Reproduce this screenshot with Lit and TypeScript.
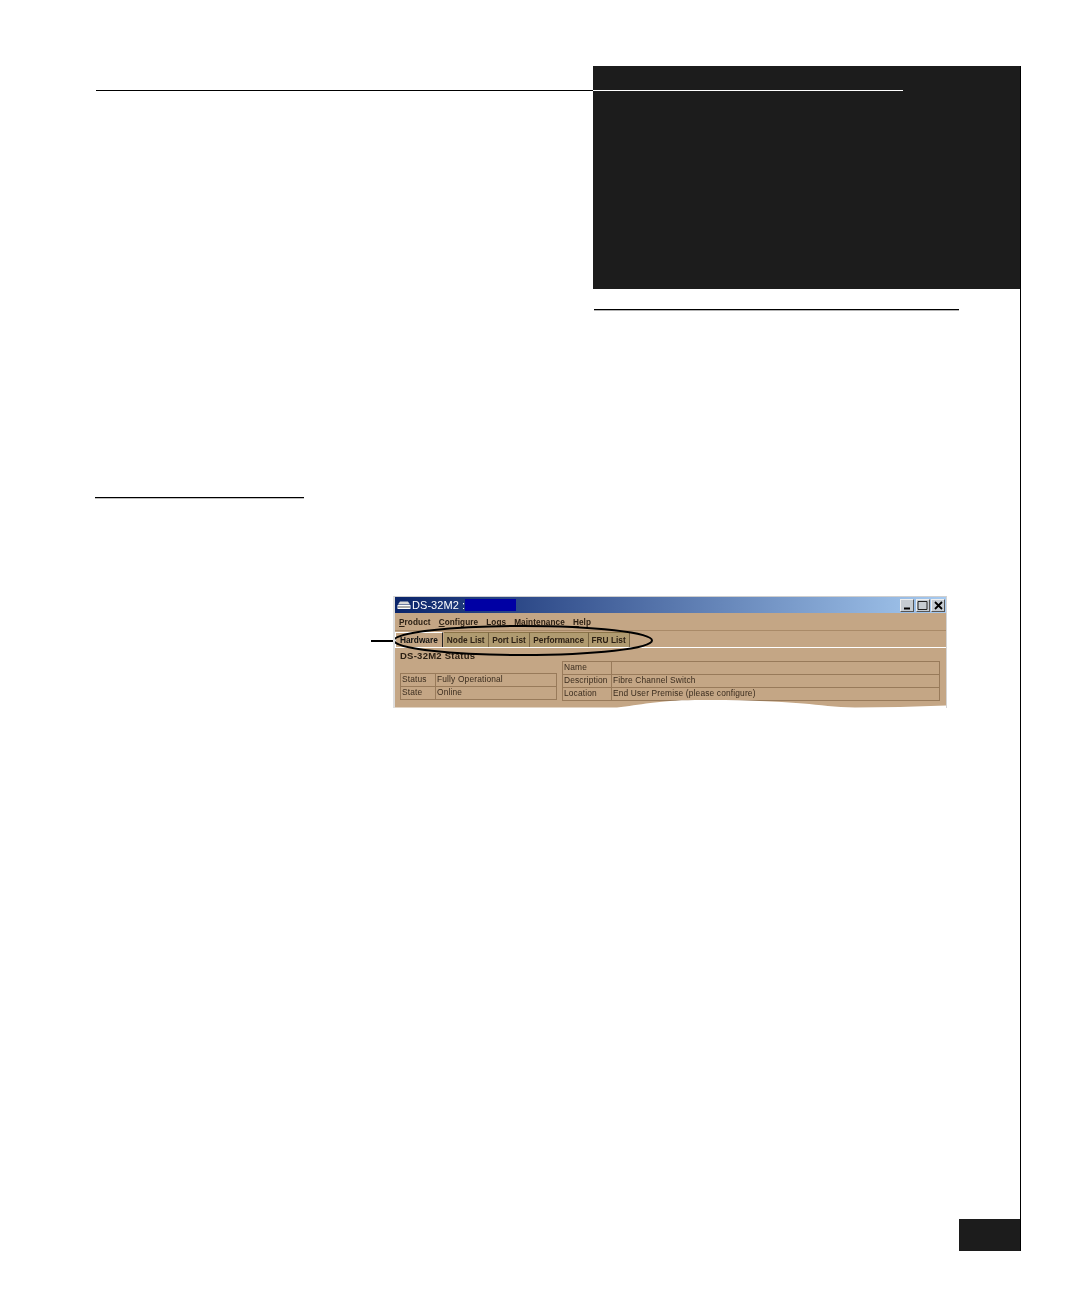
import { LitElement, html, css } from "lit";
import { customElement } from "lit/decorators.js";

@customElement("app-root")
export class AppRoot extends LitElement {
  static styles = css`
    :host { display: block; width: 1080px; height: 1296px; background: #fff; font-family: "Liberation Sans", Arial, sans-serif; overflow: hidden; }
    .page { display: flex; flex-direction: column; padding-top: 66px; box-sizing: border-box; height: 1296px; }
    .top { display: flex; width: 1021px; height: 223px; }
    .top-left { width: 593px; box-sizing: border-box; padding: 24px 0 0 96px; }
    .rule-black { height: 1px; background: #000; }
    .dark { flex: 1; box-sizing: border-box; background: #1c1c1c; border-right: 1px solid #000; padding-top: 24px; }
    .rule-white { width: 310px; height: 1px; background: #fff; }
    .body { width: 1021px; height: 962px; box-sizing: border-box; border-right: 1px solid #000; display: flex; flex-direction: column; }
    .rule-sub { width: 365px; height: 1px; background: #000; box-shadow: 0 1px 0 rgba(0,0,0,.3); margin: 20px 0 0 594px; }
    .rule-sec { width: 209px; height: 1px; background: #000; box-shadow: 0 1px 0 rgba(0,0,0,.25); margin: 187px 0 0 95px; }
    .figure { display: flex; align-items: flex-start; margin: 98px 0 0 371px; }
    .callout { width: 22px; height: 2px; background: #000; margin-top: 44px; }
    .window { position: relative; width: 554px; height: 112px; box-sizing: border-box; background: #c4a685; border-left: 2px solid #dedede; border-right: 1px solid #d4d4d4; border-top: 1px solid #cfcfcf; filter: blur(0.4px); overflow: hidden; color: #2c2014; }
    .titlebar { height: 16px; display: flex; align-items: center; padding: 0 1px 0 2px; background: linear-gradient(90deg, #0a246a, #a6caf0); color: #fff; font-size: 11px; letter-spacing: 0.05px; }
    .pc { width: 14px; height: 10px; margin-right: 1px; flex: none; }
    .app-name { width: 53px; flex: none; white-space: nowrap; }
    .redact { width: 51px; height: 12px; background: #0000a4; flex: none; }
    .controls { margin-left: auto; display: flex; gap: 1.5px; align-items: center; }
    .ctl { width: 12px; height: 11px; background: #c6ccd2; border: 1px solid; border-color: #eee #555 #555 #eee; box-sizing: content-box; display: flex; align-items: center; justify-content: center; }
    .ctl svg { display: block; }
    .menu { height: 18px; padding-top: 1px; box-sizing: border-box; display: flex; align-items: center; gap: 8px; padding-left: 4px; font-size: 8.2px; font-weight: bold; letter-spacing: 0.1px; border-bottom: 1px solid #a98a68; }
    .tabs { height: 17px; display: flex; align-items: flex-end; font-size: 8.3px; font-weight: bold; border-bottom: 1px solid #fff; box-sizing: border-box; }
    .tab { height: 14px; line-height: 14px; padding: 0 3.5px 0 3px; background: #b09b70; border-top: 1px solid #8a7448; border-right: 1px solid #7a6644; white-space: nowrap; }
    .tab.on { background: #c4a685; border-top: 1px solid #fff; border-left: 1px solid #fff; border-right: 1px solid #222; color: #111; margin-right: 1px; padding: 0 4px 0 4px; }
    .content { display: flex; padding-left: 5px; position: relative; gap: 5px; }
    .left-col { width: 157px; flex: none; }
    .status-title { font-size: 9.5px; font-weight: bold; letter-spacing: 0.25px; line-height: 12px; margin: 2px 0 0 0; height: 23px; white-space: nowrap; }
    .grid { display: grid; border: 1px solid #987a5a; border-bottom: 0; font-size: 8.4px; letter-spacing: 0.15px; }
    .grid.small { grid-template-columns: 35px 1fr; }
    .grid.large { grid-template-columns: 49px 1fr; width: 378px; margin-top: 13px; box-sizing: border-box; }
    .cell { height: 12px; line-height: 11px; padding-left: 1px; border-bottom: 1px solid #987a5a; white-space: nowrap; color: #3a2c1e; }
    .cell.k { border-right: 1px solid #987a5a; }
    .ellipse { position: absolute; left: 0; top: 0; width: 551px; height: 111px; pointer-events: none; }
    .wave { position: absolute; left: 0; top: 0; width: 551px; height: 111px; }
    .spacer { flex: 1; }
    .pageno { align-self: flex-end; width: 61px; height: 32px; background: #1c1c1c; }
  `;

  render() {
    return html`
      <div class="page">
        <div class="top">
          <div class="top-left"><div class="rule-black"></div></div>
          <div class="dark"><div class="rule-white"></div></div>
        </div>
        <div class="body">
          <div class="rule-sub"></div>
          <div class="rule-sec"></div>
          <div class="figure">
            <div class="callout"></div>
            <div class="window">
              <div class="titlebar">
                <svg class="pc" viewBox="0 0 14 10"><path d="M3 1.500h8l2 3H1z" fill="#d8d8d8"/><rect x="0.500" y="5" width="13" height="4" fill="#fff"/><path d="M1 7h12" stroke="#555" stroke-width="1"/></svg>
                <span class="app-name">DS-32M2 :</span>
                <span class="redact"></span>
                <div class="controls">
                  <div class="ctl"><svg width="9" height="9" viewBox="0 0 9 9"><path d="M1 7.500h6" stroke="#000" stroke-width="2"/></svg></div>
                  <div class="ctl"><svg width="11" height="10" viewBox="0 0 11 10"><path d="M1 1.500h9v8H1z" fill="none" stroke="#222" stroke-width="1"/></svg></div>
                  <div class="ctl"><svg width="9" height="9" viewBox="0 0 9 9"><path d="M1 1l7 7M8 1l-7 7" stroke="#000" stroke-width="1.800"/></svg></div>
                </div>
              </div>
              <div class="menu">
                <span><u>P</u>roduct</span><span><u>C</u>onfigure</span><span><u>L</u>ogs</span><span><u>M</u>aintenance</span><span><u>H</u>elp</span>
              </div>
              <div class="tabs">
                <div class="tab on">Hardware</div>
                <div class="tab">Node List</div>
                <div class="tab">Port List</div>
                <div class="tab">Performance</div>
                <div class="tab">FRU List</div>
              </div>
              <div class="content">
                <div class="left-col">
                  <div class="status-title">DS-32M2 Status</div>
                  <div class="grid small">
                    <div class="cell k">Status</div><div class="cell">Fully Operational</div>
                    <div class="cell k">State</div><div class="cell">Online</div>
                  </div>
                </div>
                <div class="grid large">
                  <div class="cell k">Name</div><div class="cell"></div>
                  <div class="cell k">Description</div><div class="cell">Fibre Channel Switch</div>
                  <div class="cell k">Location</div><div class="cell">End User Premise (please configure)</div>
                </div>
              </div>
              <svg class="wave" viewBox="0 0 551 111"><path d="M0 110.500 H222 C245 108 262 103.500 300 103 C340 102.500 375 104 408 106.500 C425 108 440 110 460 110.500 C490 110.500 520 109.500 551 108.500 V111 H0 Z" fill="#fff"/></svg>
              <svg class="ellipse" viewBox="0 0 551 111"><ellipse cx="128" cy="43.500" rx="129" ry="14.500" fill="none" stroke="#000" stroke-width="2"/></svg>
            </div>
          </div>
          <div class="spacer"></div>
          <div class="pageno"></div>
        </div>
      </div>
    `;
  }
}
